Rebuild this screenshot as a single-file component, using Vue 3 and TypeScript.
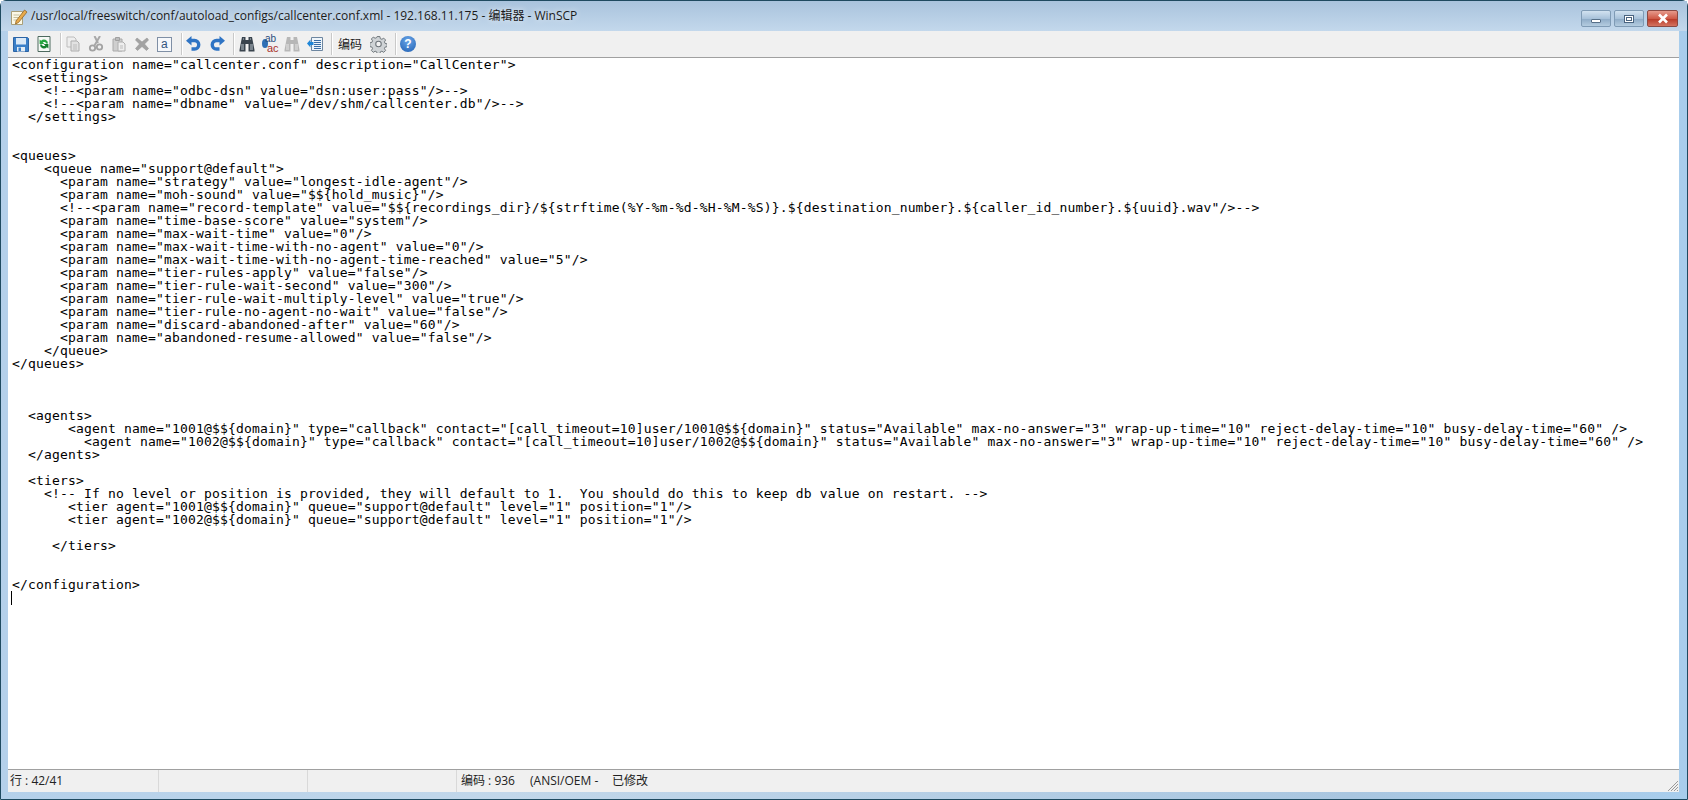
<script setup lang="ts">
const lines: string[] = [
  '<configuration name="callcenter.conf" description="CallCenter">',
  '  <settings>',
  '    <!--<param name="odbc-dsn" value="dsn:user:pass"/>-->',
  '    <!--<param name="dbname" value="/dev/shm/callcenter.db"/>-->',
  '  </settings>',
  '',
  '',
  '<queues>',
  '    <queue name="support@default">',
  '      <param name="strategy" value="longest-idle-agent"/>',
  '      <param name="moh-sound" value="$${hold_music}"/>',
  '      <!--<param name="record-template" value="$${recordings_dir}/${strftime(%Y-%m-%d-%H-%M-%S)}.${destination_number}.${caller_id_number}.${uuid}.wav"/>-->',
  '      <param name="time-base-score" value="system"/>',
  '      <param name="max-wait-time" value="0"/>',
  '      <param name="max-wait-time-with-no-agent" value="0"/>',
  '      <param name="max-wait-time-with-no-agent-time-reached" value="5"/>',
  '      <param name="tier-rules-apply" value="false"/>',
  '      <param name="tier-rule-wait-second" value="300"/>',
  '      <param name="tier-rule-wait-multiply-level" value="true"/>',
  '      <param name="tier-rule-no-agent-no-wait" value="false"/>',
  '      <param name="discard-abandoned-after" value="60"/>',
  '      <param name="abandoned-resume-allowed" value="false"/>',
  '    </queue>',
  '</queues>',
  '',
  '',
  '',
  '  <agents>',
  '       <agent name="1001@$${domain}" type="callback" contact="[call_timeout=10]user/1001@$${domain}" status="Available" max-no-answer="3" wrap-up-time="10" reject-delay-time="10" busy-delay-time="60" />',
  '         <agent name="1002@$${domain}" type="callback" contact="[call_timeout=10]user/1002@$${domain}" status="Available" max-no-answer="3" wrap-up-time="10" reject-delay-time="10" busy-delay-time="60" />',
  '  </agents>',
  '',
  '  <tiers>',
  '    <!-- If no level or position is provided, they will default to 1.  You should do this to keep db value on restart. -->',
  '       <tier agent="1001@$${domain}" queue="support@default" level="1" position="1"/>',
  '       <tier agent="1002@$${domain}" queue="support@default" level="1" position="1"/>',
  '',
  '     </tiers>',
  '',
  '',
  '</configuration>',
]
</script>

<template>
  <div class="window">
    <header class="titlebar">
      <svg class="app-icon" width="18" height="18" viewBox="0 0 18 18">
        <path d="M1.500 3.500h11v13h-11z" fill="#fbf8e6" stroke="#a99f78" />
        <path d="M3.500 7h6M3.500 9.500h5M3.500 12h4" stroke="#c6bf9c" />
        <path d="M6 13 14.500 2 17 4 8.500 14.500 5.500 16z" fill="#e9ab4a" stroke="#8f6426" stroke-width=".8" />
      </svg>
      <span class="title">/usr/local/freeswitch/conf/autoload_configs/callcenter.conf.xml - 192.168.11.175 - 编辑器 - WinSCP</span>
      <div class="controls">
        <div class="ctl">
          <span class="min-glyph"></span>
        </div>
        <div class="ctl">
          <span class="max-glyph"></span>
        </div>
        <div class="ctl close">
          <svg width="14" height="11" viewBox="0 0 14 11"><path d="M3 1.500 11 9.500M11 1.500 3 9.500" stroke="#fff" stroke-width="2.600" /></svg>
        </div>
      </div>
    </header>

    <div class="client">
      <nav class="toolbar">
        <button class="tb">
          <svg width="16" height="16" viewBox="0 0 16 16"><path d="M.500 1.500h14l1 1v13H.500z" fill="#3a7fc8" stroke="#2c64a5" /><path d="M3 2h10v6.500H3z" fill="#dbe9f7" /><path d="M4 11h8v4.500H4z" fill="#e4edf5" /><path d="M5.500 11.500h2.500v3.500H5.500z" fill="#3a7fc8" /></svg>
        </button>
        <button class="tb">
          <svg width="16" height="16" viewBox="0 0 16 16"><path d="M2 .500h12v15H2z" fill="#f6f9f6" stroke="#4d6a5f" /><path d="M12 7.500a4 4 0 0 0-6.900-2.800L3.600 3.400V8h4.700L6.700 6.300a2.300 2.300 0 0 1 3.500 1.200z" fill="#25a53f" /><path d="M4 8.500a4 4 0 0 0 6.900 2.800l1.500 1.300V8H7.700l1.600 1.700a2.300 2.300 0 0 1-3.500-1.200z" fill="#178030" /></svg>
        </button>
        <i class="sep"></i>
        <button class="tb">
          <svg width="16" height="16" viewBox="0 0 16 16"><path d="M2 1h7l2 2v8H2z" fill="#eee" stroke="#bdbdbd" /><path d="M6 5h6l2 2v8H6z" fill="#e2e2e2" stroke="#aeaeae" /><path d="M8 9h4M8 11h4M8 13h4" stroke="#bdbdbd" /></svg>
        </button>
        <button class="tb">
          <svg width="16" height="16" viewBox="0 0 16 16"><path d="M12 0 6.500 9.500M6.500 0l3.500 7" stroke="#a8a8a8" stroke-width="2" fill="none" /><circle cx="4.500" cy="12" r="2.700" fill="none" stroke="#a3a3a3" stroke-width="1.800" /><circle cx="11.500" cy="11" r="2.700" fill="none" stroke="#a3a3a3" stroke-width="1.800" /></svg>
        </button>
        <button class="tb">
          <svg width="16" height="16" viewBox="0 0 16 16"><path d="M2 3h9v12H2z" fill="#cfcfcf" stroke="#aaa" /><path d="M4.500 1.500h4v3h-4z" fill="#bcbcbc" stroke="#a0a0a0" /><path d="M7 6h5l2 2v7H7z" fill="#eee" stroke="#aeaeae" /><path d="M9 10h3M9 12h3" stroke="#bdbdbd" /></svg>
        </button>
        <button class="tb">
          <svg width="16" height="16" viewBox="0 0 16 16"><path d="M3 2 8 6 13 2l1.500 2L10.500 8l4 4.500L12.500 14.500 8 10.500 3.500 14.500 1.500 12.500l4-4.500-4-4z" fill="#a2a2a2" stroke="#969696" stroke-width=".6" /></svg>
        </button>
        <button class="tb">
          <span class="letter-box">a</span>
        </button>
        <i class="sep"></i>
        <button class="tb">
          <svg width="16" height="16" viewBox="0 0 16 16"><path d="M4 4.500h4.500a4 4 0 0 1 0 8.500H5.500" fill="none" stroke="#2f74c4" stroke-width="3.400" /><path d="M0 4.800 5.500 0v9.500z" fill="#2f74c4" /></svg>
        </button>
        <button class="tb">
          <svg width="16" height="16" viewBox="0 0 16 16"><path d="M12 4.500H7.500a4 4 0 0 0 0 8.500h3" fill="none" stroke="#2f74c4" stroke-width="3.400" /><path d="M16 4.800 10.500 0v9.500z" fill="#2f74c4" /></svg>
        </button>
        <i class="sep"></i>
        <button class="tb">
          <svg width="16" height="16" viewBox="0 0 16 16"><path d="M3 1h3.500v3H9.500V1H13l1 5 1.500 8v1.500H9.500V8h-3v7.500H.500V14L2 6z" fill="#3a444e" /><path d="M2 9h3M2 11h3M2 13h3M11 9h3M11 11h3M11 13h3M4 3h1M11 3h1" stroke="#b9c4cc" /></svg>
        </button>
        <button class="tb ab">
          <i class="ab-blob"></i><span class="ab-top">ab</span><span class="ab-bot">ac</span>
        </button>
        <button class="tb">
          <svg width="16" height="16" viewBox="0 0 16 16"><path d="M3 1h3.500v3H9.500V1H13l1 5 1.500 8v1.500H9.500V8h-3v7.500H.500V14L2 6z" fill="#b7b7b7" /><path d="M2 9h3M2 11h3M2 13h3M11 9h3M11 11h3M11 13h3" stroke="#e6e6e6" /></svg>
        </button>
        <button class="tb">
          <svg width="16" height="16" viewBox="0 0 16 16"><path d="M4.500 1.500h11v13h-11z" fill="#eef5fb" stroke="#6d86a0" /><path d="M7 4.500h7M7 6.500h7M7 8.500h7M7 10.500h7M7 12.500h7" stroke="#3b6ea5" /><path d="M0 7.500 3.500 3.500v2.500h3v3h-3v2.500z" fill="#1f86d8" /></svg>
        </button>
        <i class="sep"></i>
        <button class="tb wide">编码</button>
        <button class="tb">
          <svg width="17" height="17" viewBox="0 0 16 16"><path d="M6.700 1h2.600l.4 2 1.500.6 1.700-1.100 1.800 1.800-1.100 1.700.6 1.500 2 .4v2.600l-2 .4-.6 1.500 1.100 1.700-1.800 1.800-1.700-1.100-1.500.6-.4 2H6.700l-.4-2-1.500-.6-1.700 1.100-1.800-1.800 1.100-1.700-.6-1.500-2-.4V6.900l2-.4.6-1.500-1.100-1.700 1.800-1.800 1.700 1.100 1.500-.6z" transform="translate(0 -.5)" fill="#cfd3d6" stroke="#6c7379" stroke-width=".9" /><circle cx="8" cy="7.500" r="2.600" fill="#f2f2f2" stroke="#6c7379" /></svg>
        </button>
        <i class="sep"></i>
        <button class="tb">
          <span class="help">?</span>
        </button>
      </nav>

      <main class="editor">
        <div v-for="(line, i) in lines" :key="i" class="line">{{ line }}</div>
        <div class="line"><i class="caret"></i></div>
      </main>

      <footer class="statusbar">
        <div class="pane p1">行 : 42/41</div>
        <div class="pane p2"></div>
        <div class="pane p3"></div>
        <div class="pane p4"><span class="enc">编码 : 936</span><span class="ansi">(ANSI/OEM -</span><span>已修改</span></div>
        <svg class="grip" width="14" height="14" viewBox="0 0 14 14"><path d="M13 3 3 13M13 6 6 13M13 9l-4 4M13 12l-1 1" stroke="#9a9a9a" fill="none" /></svg>
      </footer>
    </div>
  </div>
</template>

<style>
html, body { margin: 0; background: #fff; overflow: hidden; }
</style>

<style scoped>
.window {
  box-sizing: border-box;
  width: 1688px;
  height: 800px;
  display: flex;
  flex-direction: column;
  background: linear-gradient(90deg, #b4d0ea 0, #c2d7ea 30%, #a9c6e0 80%, #a8cdec 100%);
  border: 1px solid #1f4a60;
  border-radius: 6px 6px 0 0;
  padding: 0 8px 7px 7px;
}
.titlebar {
  height: 30px;
  flex: none;
  display: flex;
  align-items: center;
  margin: 0 -8px 0 -7px;
  padding: 0 9px 0 8px;
  background: linear-gradient(180deg, #a9c3dd 0, #c3d8ec 100%);
  box-sizing: border-box;
}
.app-icon { margin: 2px 0 0 1px; }
.title {
  margin-left: 3px;
  font: 12px/16px "Open Sans", "Noto Sans CJK SC", sans-serif;
  color: #1b1b1b;
  text-shadow: 0 0 6px rgba(255, 255, 255, .8);
  white-space: nowrap;
}
.controls {
  margin-left: auto;
  display: flex;
  gap: 3px;
  align-self: flex-start;
  margin-top: 9px;
}
.ctl {
  box-sizing: border-box;
  width: 30px;
  height: 17px;
  border: 1px solid #7f9bb5;
  border-radius: 2px;
  background: linear-gradient(180deg, #d2e2f0 0, #a8c2da 50%, #90adc8 55%, #b4cce0 100%);
  display: flex;
  align-items: center;
  justify-content: center;
}
.close {
  width: 31px;
  border-color: #8a4a44;
  background: linear-gradient(180deg, #e69a8c 0, #cf5b48 50%, #b93c2a 55%, #d47360 100%);
}
.min-glyph {
  box-sizing: border-box;
  width: 10px;
  height: 4px;
  background: #fff;
  border: 1px solid #566f88;
  border-radius: 1px;
  margin-top: 5px;
}
.max-glyph {
  box-sizing: border-box;
  width: 10px;
  height: 8px;
  background: #fff;
  border: 1px solid #4a6480;
  box-shadow: inset 0 0 0 1px #fff, inset 0 0 0 2px #4a6480;
}
.client {
  flex: 1;
  min-height: 0;
  display: flex;
  flex-direction: column;
}
.toolbar {
  height: 27px;
  flex: none;
  display: flex;
  align-items: center;
  background: #f0f0f0;
  padding-left: 1.5px;
  box-sizing: border-box;
  border-bottom: 1px solid #a0a0a0;
}
.tb {
  width: 22.75px;
  height: 22px;
  padding: 0;
  border: 0;
  background: none;
  display: flex;
  align-items: center;
  justify-content: center;
  flex: none;
}
.sep {
  width: 1px;
  height: 22px;
  margin: 0 1px 0 5px;
  background: #c9c9c9;
  box-shadow: 1px 0 0 #fff;
  flex: none;
}
.wide {
  width: 33.5px;
  font: 12px/16px "Noto Sans CJK SC", sans-serif;
  color: #1a1a1a;
}
.letter-box {
  box-sizing: border-box;
  width: 15px;
  height: 15px;
  border: 1px solid #7f8fa5;
  background: #f6f8fb;
  font: 12px/13px "Liberation Sans", sans-serif;
  color: #33557f;
  text-align: center;
}
.help {
  width: 16px;
  height: 16px;
  border-radius: 50%;
  background: radial-gradient(circle at 50% 30%, #6aa6e8, #1f5fb2);
  color: #fff;
  font: bold 12px/16px "Liberation Sans", sans-serif;
  text-align: center;
}
.ab {
  position: relative;
  font-family: "Liberation Sans", sans-serif;
}
.ab-blob {
  position: absolute;
  left: 4px;
  top: 6px;
  width: 6px;
  height: 9px;
  border-radius: 50%;
  background: #2f6fb5;
}
.ab-top {
  position: absolute;
  left: 7px;
  top: 1px;
  font-size: 10px;
  line-height: 10px;
  color: #2b4f7e;
}
.ab-bot {
  position: absolute;
  left: 9px;
  top: 10px;
  font-size: 11px;
  line-height: 10px;
  color: #a8322c;
}
.editor {
  flex: 1;
  min-height: 0;
  overflow: hidden;
  background: #fff;
  padding: 0 0 0 4px;
  border-bottom: 1px solid #a0a0a0;
  font: 13px/13px "DejaVu Sans Mono", monospace;
  letter-spacing: .17px;
  color: #000;
}
.line {
  height: 13px;
  white-space: pre;
}
.caret {
  display: inline-block;
  width: 1px;
  height: 14px;
  background: #000;
  vertical-align: top;
  margin-left: -1px;
}
.statusbar {
  position: relative;
  height: 22px;
  flex: none;
  display: flex;
  background: #f0f0f0;
  font: 12px/22px "Open Sans", "Noto Sans CJK SC", sans-serif;
  color: #222;
}
.pane {
  box-sizing: border-box;
  border-right: 1px solid #d9d9d9;
  white-space: nowrap;
}
.p1 { width: 151px; padding-left: 2px; }
.p2 { width: 149px; }
.p3 { width: 149px; }
.p4 { border: 0; padding-left: 4px; display: flex; }
.enc { width: 69px; }
.ansi { width: 82px; }
.grip {
  position: absolute;
  right: 0;
  bottom: 0;
}
</style>
